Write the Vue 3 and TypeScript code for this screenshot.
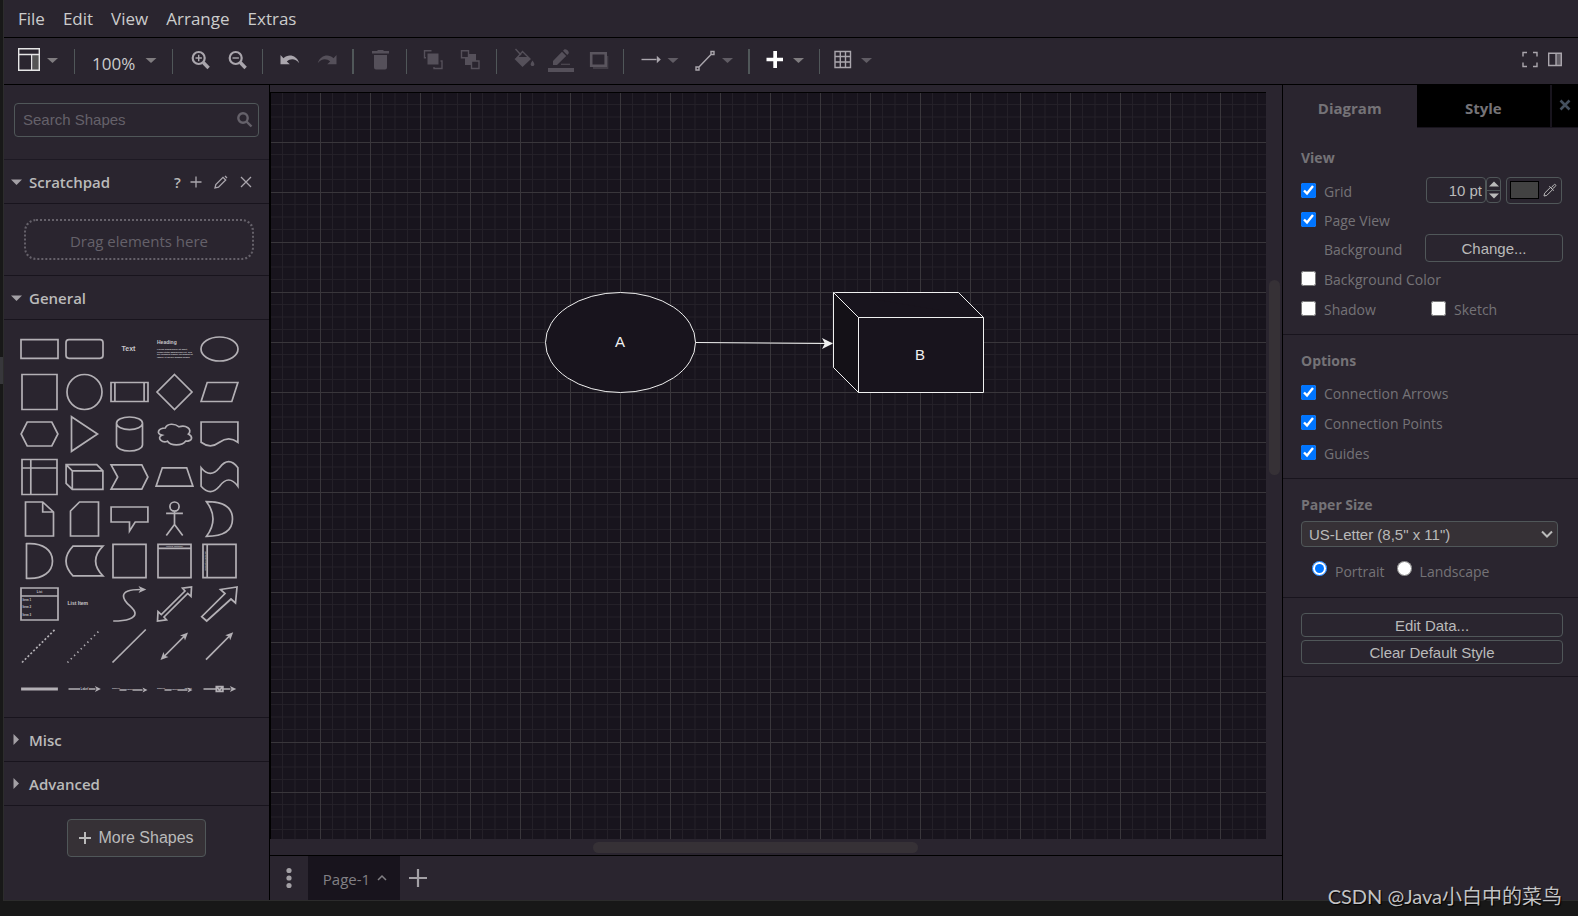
<script setup lang="ts">
import { ref } from 'vue'

interface ShapeText {
  t: string
  x: number
  y: number
  size: number
  middle?: boolean
  vertical?: boolean
}

interface Shape {
  name: string
  d?: string
  solid?: string
  dash?: string
  texts?: ShapeText[]
}

interface Tool {
  name: string
  x?: number
  w?: number
  sep?: 'thin' | 'thick'
  dim?: boolean
}

const menus: string[] = ['File', 'Edit', 'View', 'Arrange', 'Extras']

const tools: Tool[] = [
  { name: 'Zoom In', x: 173, w: 46 },
  { name: 'Zoom Out', x: 219, w: 43 },
  { name: 's1', sep: 'thin' },
  { name: 'Undo', x: 263, w: 46 },
  { name: 'Redo', x: 309, w: 43, dim: true },
  { name: 's2', sep: 'thick' },
  { name: 'Delete', x: 354, w: 52, dim: true },
  { name: 's3', sep: 'thin' },
  { name: 'To Front', x: 407, w: 45, dim: true },
  { name: 'To Back', x: 452, w: 44, dim: true },
  { name: 's4', sep: 'thin' },
  { name: 'Fill Color', x: 497, w: 45, dim: true },
  { name: 'Line Color', x: 542, w: 40, dim: true },
  { name: 'Shadow', x: 582, w: 41, dim: true },
  { name: 's5', sep: 'thin' },
  { name: 'Connection', x: 624, w: 60 },
  { name: 'Waypoints', x: 684, w: 64 },
  { name: 's6', sep: 'thick' },
  { name: 'Insert', x: 750, w: 69 },
  { name: 's7', sep: 'thin' },
  { name: 'Table', x: 820, w: 60 },
]

const shapes: Shape[] = [
  { name: 'Rectangle', d: 'M-18.5-9.3h37v18.6h-37z' },
  { name: 'Rounded Rectangle', d: 'M-15.5-9.3h31a3 3 0 0 1 3 3v12.6a3 3 0 0 1-3 3h-31a3 3 0 0 1-3-3v-12.6a3 3 0 0 1 3-3z' },
  { name: 'Text', texts: [{ t: 'Text', x: -1, y: 2, size: 7, middle: true }] },
  {
    name: 'Textbox',
    texts: [
      { t: 'Heading', x: -17.5, y: -5.5, size: 5 },
      { t: 'Lorem ipsum dolor sit amet,', x: -17.5, y: 1, size: 2.3 },
      { t: 'consectetur adipisicing elit, sed', x: -17.5, y: 3.6, size: 2.3 },
      { t: 'do eiusmod tempor incididunt ut', x: -17.5, y: 6.3, size: 2.3 },
      { t: 'labore et dolore magna aliqua.', x: -17.5, y: 9.1, size: 2.3 },
    ],
  },
  { name: 'Ellipse', d: 'M-18.5 0a18.5 12 0 1 1 37 0a18.5 12 0 1 1-37 0z' },
  { name: 'Square', d: 'M-17.5-17.5h35v35h-35z' },
  { name: 'Circle', d: 'M-17.5 0a17.5 17.5 0 1 1 35 0a17.5 17.5 0 1 1-35 0z' },
  { name: 'Process', d: 'M-18.5-9.5h37v19h-37zM-14.6-9.5v19M14.6-9.5v19' },
  { name: 'Diamond', d: 'M0-17.5L17.5 0L0 17.5L-17.5 0z' },
  { name: 'Parallelogram', d: 'M-12.3-9.5H18.4L12.3 9.5H-18.4z' },
  { name: 'Hexagon', d: 'M-12.3-12H12.3L18.4 0L12.3 12H-12.3L-18.4 0z' },
  { name: 'Triangle', d: 'M-13-17.3L13 0L-13 17.3z' },
  { name: 'Cylinder', d: 'M-13-10.7a13 6.3 0 0 1 26 0V10.7a13 6.3 0 0 1-26 0zM-13-10.7a13 6.3 0 0 0 26 0' },
  { name: 'Cloud', d: 'M-9.2-6C-16.6-6-18.5 0-12.6 1.2C-18.5 3.8-11.8 9.6-7 7.2C-3.7 12 7.4 12 11.1 7.2C18.5 7.2 18.5 2.4 13.9 0C18.5-4.8 11.1-9.6 4.6-7.2C0-10.8-7.4-10.8-9.2-6z' },
  { name: 'Document', d: 'M-18.4-12H18.4V8.3Q9.2 1.3 0 8.3Q-9.2 15.3-18.4 8.3z' },
  { name: 'Internal Storage', d: 'M-17.5-17.5h35v35h-35zM-8.7-17.5v35M-17.5-9h35' },
  { name: 'Cube', d: 'M-18.4-12.3H12.3L18.4-6.2V12.3H-12.2L-18.4 6.3zM-18.4-12.3L-12.2-6.2V12.3M-12.2-6.2H18.4' },
  { name: 'Step', d: 'M-18.4-12.2H12.3L18.4 0L12.3 12.2H-18.4L-11.8 0z' },
  { name: 'Trapezoid', d: 'M-12.2-9.2H12.2L18.4 9.2H-18.4z' },
  { name: 'Tape', d: 'M-18.4-9.3Q-9.2 1.9 0-9.3Q9.2-21.3 18.4-9.3V9.3Q9.2-3.3 0 9.3Q-9.2 20-18.4 9.3z' },
  { name: 'Note', d: 'M-14-17H3.2L14-7V17H-14zM3.2-17V-7H14' },
  { name: 'Card', d: 'M-5-17H14V17H-14V-8z' },
  { name: 'Callout', d: 'M-18.4-12H18.4V3H5.7L0 12V3H-18.4z' },
  { name: 'Actor', d: 'M-4.6-12.4a4.6 4.6 0 1 1 9.2 0a4.6 4.6 0 1 1-9.2 0zM0-7.8V5.5M-8.4-5.6H8.4M0 5.5L-8.2 16.5M0 5.5L8.2 16.5' },
  { name: 'Or', d: 'M-13-17.3Q13-17.3 13 0Q13 17.3-13 17.3Q0 0-13-17.3z' },
  { name: 'And', d: 'M-13-17.3C4-18.5 13-10.5 13 0C13 10.5 4 18.5-13 17.3z' },
  { name: 'Data Storage', d: 'M-11.5-14.8H18.4Q3.8 0 18.4 14.8H-11.5Q-25.5 0-11.5-14.8z' },
  { name: 'Container', d: 'M-16.5-16.6h33v33.2h-33z' },
  { name: 'Vertical Container', d: 'M-16.5-16.6h33v33.2h-33zM-16.5-12.7h33', texts: [{ t: 'Vertical Container', x: 0, y: -13.8, size: 2, middle: true }] },
  { name: 'Horizontal Container', d: 'M-16.5-16.6h33v33.2h-33zM-12.3-16.6v33.2', texts: [{ t: 'Horizontal Container', x: 0, y: -13.6, size: 2, middle: true, vertical: true }] },
  {
    name: 'List',
    d: 'M-18.5-16h37v32h-37zM-18.5-8h37',
    texts: [
      { t: 'List', x: 0, y: -11, size: 3, middle: true },
      { t: 'Item 1', x: -17, y: -3, size: 3 },
      { t: 'Item 2', x: -17, y: 4, size: 3 },
      { t: 'Item 3', x: -17, y: 11.5, size: 3 },
    ],
  },
  { name: 'List Item', texts: [{ t: 'List Item', x: -17, y: 1, size: 5 }] },
  { name: 'Curve', d: 'M-16.3 17C-2 17 5.5 14 5.5 9.5C5.5 3-6 0-6-8C-6-13 3-14.5 11-14.5', solid: 'M16.8-14.4L9-18l2 3.5l-2 3.5z' },
  { name: 'Bidirectional Arrow', d: 'M17-17L16.5-7.7L13.2-10.7L-10.5 13L-8 15.8L-17 17L-16.5 7.7L-13.2 10.7L10.5-13L8-15.8z' },
  { name: 'Arrow', d: 'M17.5-17L1-14.5L5.5-10.5L-17.8 12.7L-12.8 17L11.5-5L16-1z' },
  { name: 'Dashed Line', d: 'M-17.5 16.5L15.5-16.5', dash: '2 2' },
  { name: 'Dotted Line', d: 'M-17 16.5L14.5-15', dash: '1.3 3.4' },
  { name: 'Line', d: 'M-17 16.5L16.3-16.5' },
  { name: 'Bidirectional Connector', d: 'M-10 10L10-10', solid: 'M13.5-13.5L10.5-5.5L9.3-9.3L5.5-10.5zM-14 14L-6 11L-9.8 9.8L-11 6z' },
  { name: 'Directional Connector', d: 'M-13.5 13.7L10-10', solid: 'M13.7-13.7L10.7-5.7L9.5-9.5L5.7-10.7z' },
  { name: 'Link', solid: 'M-18.4-1.4h36.8v2.8h-36.8z' },
  { name: 'Connector with Label', d: 'M-16 0H-4.5M4.5 0H11', solid: 'M16.4 0L10.4-3l1.6 3l-1.6 3z', texts: [{ t: 'Label', x: 0, y: 1, size: 3, middle: true }] },
  {
    name: 'Connector with 2 Labels',
    d: 'M-10 1H-3M3 1H13',
    solid: 'M18 1L13-1.5l1.2 2.5l-1.2 2.5z',
    texts: [
      { t: 'Source', x: -17.5, y: 0, size: 2.4 },
      { t: 'Label', x: 0, y: 1.4, size: 2.4, middle: true },
    ],
  },
  {
    name: 'Connector with 3 Labels',
    d: 'M-10 1H-3M3 1H13',
    solid: 'M18 1L13-1.5l1.2 2.5l-1.2 2.5z',
    texts: [
      { t: 'Source', x: -17.5, y: 0, size: 2.4 },
      { t: 'Label', x: 0, y: 1.4, size: 2.4, middle: true },
      { t: 'Target', x: 10, y: 0, size: 2.4 },
    ],
  },
  { name: 'Connector with Symbol', d: 'M-16 0H-3.2M3.4 0H11M-3.2-2.3h6.6v4.6h-6.6zM-3.2-2L.1 1L3.4-2', solid: 'M16.8 0L10.4-3l1.6 3l-1.6 3z' },
]

const grid = ref(true)
const pageView = ref(true)
const backgroundColor = ref(false)
const shadow = ref(false)
const sketch = ref(false)
const arrows = ref(true)
const points = ref(true)
const guides = ref(true)
const gridSize = ref('10 pt')
const paper = ref('letter')
const orientation = ref('portrait')
const search = ref('')
</script>

<template>
  <div class="app">
    <div class="editor">
      <nav class="menubar" aria-label="Main menu">
        <button v-for="m in menus" :key="m" type="button">{{ m }}</button>
      </nav>

      <div class="toolbar" role="toolbar" aria-label="Tools">
        <button type="button" aria-label="View">
          <svg width="62" height="28" viewBox="12 48 62 28">
            <path class="solid dark" d="M33 56h6v15h-6z" />
            <path class="line bright" d="M18.7 49.7h20.6v21.6H18.7zM18.7 55.5h20.6M31.7 55.5v16" />
            <path class="solid caret" d="M47 59h11l-5.500 5z" />
          </svg>
        </button>
        <span class="sep"></span>
        <button type="button" class="zoom">
          <span>100%</span>
          <svg width="12" height="28" viewBox="145 48 12 28"><path class="solid caret" d="M145.500 59h11l-5.500 5z" /></svg>
        </button>
        <span class="sep"></span>
        <template v-for="t in tools" :key="t.name">
          <span v-if="t.sep" class="sep" :class="t.sep"></span>
          <button v-else type="button" :class="{ dim: t.dim }" :aria-label="t.name">
            <svg :width="t.w" height="28" :viewBox="`${t.x} 48 ${t.w} 28`">
              <g v-if="t.name === 'Zoom In'">
                <circle class="line thick" cx="198.700" cy="59" r="6" />
                <path class="line" d="M195.500 59h6.400M198.700 55.800v6.400" />
                <path class="line heavy" d="M203.300 63.500l5.300 5.500" />
              </g>
              <g v-else-if="t.name === 'Zoom Out'">
                <circle class="line thick" cx="235.700" cy="59" r="6" />
                <path class="line" d="M232.500 59h6.400" />
                <path class="line heavy" d="M240.300 63.500l5.300 5.500" />
              </g>
              <path v-else-if="t.name === 'Undo'" class="solid" d="M280.500 56v9.200h9.300l-3-2.800c4-3.400 9-2.600 12.500 1.800c-2.600-8.200-11-9.800-15.800-5z" />
              <path v-else-if="t.name === 'Redo'" class="solid" d="M336.500 56v9.200h-9.300l3-2.800c-4-3.400-9-2.600-12.500 1.800c2.600-8.200 11-9.800 15.800-5z" />
              <path v-else-if="t.name === 'Delete'" class="solid" d="M372 52h5l1-1h5l1 1h5v2.500h-17zM374 56h13v12.500a2 2 0 0 1-2 2h-9a2 2 0 0 1-2-2z" />
              <g v-else-if="t.name === 'To Front'">
                <path class="solid" d="M427.500 54.500h11v11h-11z" />
                <path class="line" d="M431.500 51.700h-7v7h1.500M434 68v1.500h8v-7.500h-1.500" />
              </g>
              <g v-else-if="t.name === 'To Back'">
                <path class="solid" d="M465 55h11v11h-11z" />
                <path class="line cover" d="M461.500 51.700h7v7h-7zM471.500 62h7.500v7.500h-7.500z" />
              </g>
              <g v-else-if="t.name === 'Fill Color'">
                <path class="line" d="M515.500 50l5.500 6M516 60l6.500-7.500l7.500 7.500" />
                <path class="solid" d="M514.500 60l3-2h10.500l3 2l-8.500 8z" />
                <path class="solid" d="M532.500 61.500c2.500 3.200 2.500 5.500 0 5.500s-2.500-2.300 0-5.500z" />
              </g>
              <g v-else-if="t.name === 'Line Color'">
                <path class="solid" d="M553 66v-4l9-9.200l4.200 4.200l-9.200 9zM563 51.800l1.200-1.200c1.800-1.800 6 2.400 4.200 4.200l-1.200 1.200z" />
                <path class="solid" d="M561 64.800h9v1h-9zM548 69h26v4h-26z" />
              </g>
              <g v-else-if="t.name === 'Shadow'">
                <path class="solid faint" d="M593 57h15.300v13H593z" />
                <path class="backed" d="M591.200 54.200h14.500v12.500h-14.500z" />
              </g>
              <g v-else-if="t.name === 'Connection'">
                <path class="line" d="M641.500 60.500h15" />
                <path class="solid" d="M660.800 60.500l-4-3.800v7.600z" />
                <path class="solid caret soft" d="M667.500 59h11l-5.500 5z" />
              </g>
              <g v-else-if="t.name === 'Waypoints'">
                <path class="line" d="M698.500 68.500l13-13.500M696 68h3v3h-3zM711 52.500h3v3h-3z" />
                <path class="solid caret soft" d="M722 59h11l-5.500 5z" />
              </g>
              <g v-else-if="t.name === 'Insert'">
                <path class="solid white" d="M773.300 52h3.700v6.700h6v3.600h-6v6.700h-3.700v-6.700H766.500v-3.600h6.800z" />
                <path class="solid caret" d="M793 59h11l-5.500 5z" />
              </g>
              <g v-else-if="t.name === 'Table'">
                <path class="line" d="M835 52.500h15.500v16H835zM835 57.500h15.500M835 63h15.500M840.300 52.500v16M845.500 52.500v16" />
                <path class="solid caret soft" d="M861 59h11l-5.500 5z" />
              </g>
            </svg>
          </button>
        </template>
        <span class="spacer"></span>
        <button type="button" aria-label="Fullscreen">
          <svg width="31" height="28" viewBox="1512 48 31 28">
            <path class="line" d="M1523 57.500v-4h4M1533 53.500h4v4M1537 63.500v4h-4M1527 67.500h-4v-4" />
          </svg>
        </button>
        <button type="button" aria-label="Format panel">
          <svg width="25" height="28" viewBox="1543 48 25 28">
            <path class="solid soft" d="M1556 54.500h5v12h-5z" />
            <path class="line" d="M1548.700 54.200h12.600v12.300h-12.600zM1556 54.500v12" />
          </svg>
        </button>
      </div>

      <div class="body">
        <aside class="sidebar">
          <div class="search">
            <div class="searchbox">
              <input v-model="search" type="text" placeholder="Search Shapes" aria-label="Search Shapes" />
              <svg width="16" height="16" viewBox="0 0 16 16">
                <circle cx="6" cy="6" r="4.700" class="glass" />
                <path class="glass" d="M9.500 9.500L14.500 14.500" />
              </svg>
            </div>
          </div>

          <header class="head">
            <svg class="mark" width="12" height="12" viewBox="0 0 12 12"><path d="M0 3.500h11L5.500 9z" /></svg>
            <h2>Scratchpad</h2>
            <div class="acts">
              <button type="button" class="help" aria-label="Help">?</button>
              <button type="button" aria-label="Add"><svg width="14" height="14" viewBox="0 0 14 14"><path d="M7 1.500v11M1.500 7h11" /></svg></button>
              <button type="button" aria-label="Edit"><svg width="14" height="14" viewBox="0 0 14 14"><path d="M1 13l.8-3.500L9 2.300l2.700 2.700L4.500 12.200zM11 1l2 2" /></svg></button>
              <button type="button" aria-label="Close"><svg width="14" height="14" viewBox="0 0 14 14"><path d="M2 2l10 10M12 2L2 12" /></svg></button>
            </div>
          </header>
          <div class="scratch"><div class="drop">Drag elements here</div></div>

          <header class="head">
            <svg class="mark" width="12" height="12" viewBox="0 0 12 12"><path d="M0 3.500h11L5.500 9z" /></svg>
            <h2>General</h2>
          </header>
          <div class="palette">
            <button v-for="s in shapes" :key="s.name" type="button" :aria-label="s.name">
              <svg width="45" height="42" viewBox="-22.5 -21 45 42">
                <path v-if="s.d" class="outline" :d="s.d" :stroke-dasharray="s.dash" />
                <path v-if="s.solid" class="filled" :d="s.solid" />
                <text
                  v-for="x in s.texts"
                  :key="x.t"
                  :x="x.x"
                  :y="x.y"
                  :font-size="x.size"
                  :text-anchor="x.middle ? 'middle' : 'start'"
                  :transform="x.vertical ? 'rotate(-90)' : undefined"
                >{{ x.t }}</text>
              </svg>
            </button>
          </div>

          <header class="head">
            <svg class="mark" width="12" height="12" viewBox="0 0 12 12"><path d="M2.500 0L8 5.500L2.500 11z" /></svg>
            <h2>Misc</h2>
          </header>
          <header class="head">
            <svg class="mark" width="12" height="12" viewBox="0 0 12 12"><path d="M2.500 0L8 5.500L2.500 11z" /></svg>
            <h2>Advanced</h2>
          </header>
          <button type="button" class="more">
            <svg width="12" height="12" viewBox="0 0 12 12"><path d="M6 0v12M0 6h12" /></svg>
            More Shapes
          </button>
        </aside>

        <main class="stage">
          <div class="view">
            <svg class="canvas" role="img" aria-label="Diagram">
              <defs>
                <pattern id="grid" x="-1" y="-1" width="50" height="50" patternUnits="userSpaceOnUse">
                  <path class="minor" d="M0 12.500H50M0 25H50M0 37.500H50M12.500 0V50M25 0V50M37.500 0V50" />
                  <path class="major" d="M0 .5H50M.5 0V50" />
                </pattern>
              </defs>
              <rect width="100%" height="100%" fill="url(#grid)" />
              <g class="node">
                <ellipse cx="349.500" cy="249.500" rx="75" ry="50" />
                <path d="M562.500 199.500h125l25 25v75h-125l-25-25z" />
                <path class="side" d="M562.500 199.500l25 25v75l-25-25z" />
                <path d="M562.500 199.500l25 25h125M587.500 224.500v75" />
                <path d="M424.500 249.500L554 250.500" />
              </g>
              <path class="tip" d="M562 250.500L551 245l2.800 5.500l-2.800 5.500z" />
              <text x="349" y="254">A</text>
              <text x="649" y="267">B</text>
            </svg>
            <div class="vscroll"><div class="vthumb"></div></div>
          </div>
          <div class="hscroll"><div class="hthumb"></div></div>
          <footer class="tabs">
            <button type="button" class="pages" aria-label="Pages">
              <svg width="6" height="22" viewBox="0 0 6 22"><circle cx="3" cy="3.500" r="2.600" /><circle cx="3" cy="11" r="2.600" /><circle cx="3" cy="18.500" r="2.600" /></svg>
            </button>
            <button type="button" class="page">
              <span>Page-1</span>
              <svg width="10" height="10" viewBox="0 0 10 10"><path d="M1 7L5 3L9 7" /></svg>
            </button>
            <button type="button" class="add" aria-label="Insert Page">
              <svg width="18" height="18" viewBox="0 0 18 18"><path d="M9 0v18M0 9h18" /></svg>
            </button>
          </footer>
        </main>

        <aside class="format">
          <div class="ftabs">
            <button type="button" class="on">Diagram</button>
            <button type="button">Style</button>
            <button type="button" class="shut" aria-label="Close">
              <svg width="12" height="12" viewBox="0 0 12 12"><path d="M1.500 1.500l9 9M10.500 1.500l-9 9" /></svg>
            </button>
          </div>

          <section class="first">
            <h3>View</h3>
            <div class="row">
              <label><input v-model="grid" type="checkbox" /><span>Grid</span></label>
              <div class="size">
                <input v-model="gridSize" type="text" aria-label="Grid size" />
                <div class="spin">
                  <button type="button" aria-label="Increase"><svg width="10" height="6" viewBox="0 0 10 6"><path d="M0 5.500h10L5 .5z" /></svg></button>
                  <button type="button" aria-label="Decrease"><svg width="10" height="6" viewBox="0 0 10 6"><path d="M0 .5h10L5 5.500z" /></svg></button>
                </div>
                <button type="button" class="color" aria-label="Grid color">
                  <span class="swatch"></span>
                  <svg width="14" height="14" viewBox="0 0 14 14"><path d="M1 13l.6-2.800L7.500 4.300l2.200 2.200L3.800 12.400zM6.300 3.300l4.400 4.400M8.500 4.500l2.300-2.700c1.200-1.200 2.800.4 1.600 1.600L9.700 5.700" /></svg>
                </button>
              </div>
            </div>
            <div class="row short"><label><input v-model="pageView" type="checkbox" /><span>Page View</span></label></div>
            <div class="row">
              <span class="plain">Background</span>
              <button type="button" class="btn change">Change...</button>
            </div>
            <div class="row"><label><input v-model="backgroundColor" type="checkbox" /><span>Background Color</span></label></div>
            <div class="row pair">
              <label><input v-model="shadow" type="checkbox" /><span>Shadow</span></label>
              <label><input v-model="sketch" type="checkbox" /><span>Sketch</span></label>
            </div>
          </section>

          <section class="options">
            <h3>Options</h3>
            <div class="row"><label><input v-model="arrows" type="checkbox" /><span>Connection Arrows</span></label></div>
            <div class="row"><label><input v-model="points" type="checkbox" /><span>Connection Points</span></label></div>
            <div class="row"><label><input v-model="guides" type="checkbox" /><span>Guides</span></label></div>
          </section>

          <section class="paper">
            <h3>Paper Size</h3>
            <div class="pick">
              <select v-model="paper" aria-label="Paper Size">
                <option value="letter">US-Letter (8,5" x 11")</option>
                <option value="a4">A4 (210 mm x 297 mm)</option>
              </select>
              <svg width="12" height="8" viewBox="0 0 12 8"><path d="M1 1.500l5 5l5-5" /></svg>
            </div>
            <div class="radios">
              <label><input v-model="orientation" type="radio" value="portrait" /><span>Portrait</span></label>
              <label><input v-model="orientation" type="radio" value="landscape" /><span>Landscape</span></label>
            </div>
          </section>

          <section class="stack">
            <button type="button" class="btn">Edit Data...</button>
            <button type="button" class="btn">Clear Default Style</button>
          </section>
        </aside>
      </div>
    </div>
    <div class="handle"></div>
    <div class="watermark">CSDN @Java小白中的菜鸟</div>
  </div>
</template>

<style>
html,
body {
  margin: 0;
  background: #181818;
}
</style>

<style scoped>
.app {
  position: relative;
  box-sizing: border-box;
  min-height: 100vh;
  padding: 0 0 15px 3px;
  display: flex;
  background: #181818;
  font-family: 'Open Sans', 'Noto Sans', sans-serif;
  font-size: 14px;
  color: #bababa;
}
.app * {
  box-sizing: border-box;
}
.editor {
  flex: 1;
  min-width: 0;
  display: flex;
  flex-direction: column;
  background: #2a252f;
  border-left: 1px solid #2c2c2c;
  border-bottom: 1px solid #2c2c2c;
}
.handle {
  position: absolute;
  left: 0;
  top: 357px;
  width: 3px;
  height: 27px;
  background: #37373b;
}
button {
  margin: 0;
  padding: 0;
  border: 0;
  background: none;
  font: inherit;
  color: inherit;
}
svg {
  display: block;
  flex: none;
}
h2,
h3 {
  margin: 0;
}

.menubar {
  display: flex;
  align-items: center;
  gap: 18px;
  height: 38px;
  padding-left: 14px;
  border-bottom: 1px solid #000;
  font-size: 17px;
  color: #ccc;
}

.toolbar {
  display: flex;
  align-items: center;
  height: 47px;
  padding: 0 10px 0 8px;
  border-bottom: 1px solid #000;
}
.spacer {
  flex: 1;
}
.sep {
  width: 1px;
  height: 25px;
  background: #505759;
}
.sep.thick {
  width: 2px;
}
.zoom {
  width: 97px;
  display: flex;
  align-items: center;
  justify-content: space-between;
  padding: 0 15px 0 17px;
  font-size: 17px;
  color: #ccc;
}
.zoom span {
  padding-top: 4px;
}
.toolbar .solid {
  fill: #aaa6ad;
}
.toolbar .line {
  fill: none;
  stroke: #aaa6ad;
  stroke-width: 1.4;
}
.toolbar .line.thick {
  stroke-width: 2.2;
}
.toolbar .line.heavy {
  stroke-width: 3.4;
}
.toolbar .line.bright {
  stroke: #e6e6e6;
}
.toolbar .solid.dark {
  fill: #555;
}
.toolbar .solid.caret {
  fill: #7f7c7f;
}
.toolbar .solid.soft {
  fill: #605c64;
}
.toolbar .solid.white {
  fill: #fff;
}
.toolbar .dim .solid {
  fill: #55505a;
}
.toolbar .dim .solid.faint {
  fill: #423d46;
}
.toolbar .dim .line {
  stroke: #55505a;
}
.toolbar .line.cover {
  fill: #2a252f;
}
.backed {
  fill: #2a252f;
  stroke: #5a555e;
  stroke-width: 2.6;
}

.body {
  flex: 1;
  display: flex;
  min-height: 0;
}

.sidebar {
  flex: none;
  width: 266px;
  border-right: 1px solid #000;
}
.search {
  height: 75px;
  padding: 18px 10px 0;
  border-bottom: 1px solid #1d1923;
}
.searchbox {
  display: flex;
  align-items: center;
  height: 34px;
  padding: 0 5px 0 8px;
  border: 1px solid #505759;
  border-radius: 4px;
}
.searchbox input {
  flex: 1;
  min-width: 0;
  padding: 0 0 2px;
  border: 0;
  outline: 0;
  background: none;
  font: 15px 'Liberation Sans', sans-serif;
  color: #bababa;
}
.searchbox input::placeholder {
  color: #65616a;
  opacity: 1;
}
.glass {
  fill: none;
  stroke: #65616a;
  stroke-width: 2.4;
}
.head {
  display: flex;
  align-items: center;
  height: 44px;
  padding: 0 16px 0 7px;
  border-bottom: 1px solid #18141d;
}
.mark {
  margin-right: 6px;
  fill: #a3a0a5;
}
.head h2 {
  flex: 1;
  font-size: 15px;
  font-weight: 600;
  line-height: 20px;
}
.acts {
  display: flex;
  align-items: center;
  gap: 11px;
}
.acts path {
  fill: none;
  stroke: #aaa6ad;
  stroke-width: 1.300;
}
.help {
  width: 7px;
  margin-right: -3px;
  font-size: 15px;
  font-weight: 600;
}
.scratch {
  height: 72px;
  padding: 15px 15px 0 20px;
  border-bottom: 1px solid #18141d;
}
.drop {
  height: 41px;
  border: 2px dotted #65616a;
  border-radius: 12px;
  text-align: center;
  font-size: 15px;
  line-height: 41px;
  color: #65616a;
}
.palette {
  display: grid;
  grid-template-columns: repeat(5, 45px);
  grid-template-rows: repeat(9, 1fr);
  height: 398px;
  padding: 8px 0 7px 13px;
  border-bottom: 1px solid #18141d;
}
.palette .outline {
  fill: none;
  stroke: #b3b0b5;
  stroke-width: 1.700;
}
.palette .filled {
  fill: #b3b0b5;
}
.palette text {
  font-family: 'Liberation Sans', sans-serif;
  font-weight: 700;
  fill: #c8c5ca;
}
.more {
  display: flex;
  align-items: center;
  justify-content: center;
  gap: 7px;
  width: 139px;
  height: 38px;
  margin: 13px 0 30px 63px;
  border: 1px solid #505759;
  border-radius: 4px;
  background: #363136;
  font: 16px 'Liberation Sans', sans-serif;
  color: #bababa;
}
.more path {
  stroke: #bababa;
  stroke-width: 2;
}

.stage {
  flex: 1;
  min-width: 0;
  display: flex;
  flex-direction: column;
}
.view {
  flex: 1;
  display: flex;
  min-height: 0;
  padding-top: 7px;
}
.canvas {
  flex: 1;
  min-width: 0;
  height: 100%;
  border-top: 1px solid #000;
  border-left: 1px solid #000;
  background: #18141d;
}
.minor {
  fill: none;
  stroke: #242028;
}
.major {
  fill: none;
  stroke: #39363b;
}
.node {
  fill: #18141d;
  stroke: #f0f0f0;
}
.node .side {
  fill: #141117;
}
.tip {
  fill: #f0f0f0;
}
.canvas text {
  font: 15px 'Liberation Sans', sans-serif;
  text-anchor: middle;
  fill: #f0f0f0;
}
.vscroll {
  flex: none;
  width: 16px;
  padding: 188px 2px 0 3px;
}
.vthumb {
  height: 195px;
  border-radius: 6px;
  background: #363136;
}
.hscroll {
  height: 16px;
  padding: 3px 0 0 323px;
}
.hthumb {
  width: 325px;
  height: 11px;
  border-radius: 6px;
  background: #363136;
}
.tabs {
  display: flex;
  height: 45px;
  border-top: 1px solid #000;
}
.tabs button {
  display: flex;
  align-items: center;
  justify-content: center;
}
.pages {
  width: 38px;
  fill: #a3a0a5;
}
.tabs .page {
  width: 92px;
  padding-left: 2px;
  gap: 7px;
  background: #18141d;
  font-size: 15px;
  color: #828085;
}
.page span {
  padding-top: 2px;
}
.page path {
  fill: none;
  stroke: #828085;
  stroke-width: 1.500;
}
.add {
  width: 36px;
}
.add path {
  stroke: #a3a0a5;
  stroke-width: 2.200;
}

.format {
  flex: none;
  width: 296px;
  border-left: 1px solid #000;
  color: #757377;
}
.ftabs {
  display: flex;
  height: 43px;
}
.ftabs button {
  flex: 1;
  padding-top: 3px;
  border-bottom: 1px solid #18141d;
  background: #000;
  font-size: 15px;
  font-weight: 700;
  color: #757377;
}
.ftabs .on {
  border-bottom: 0;
  background: none;
}
.ftabs .shut {
  flex: none;
  display: flex;
  align-items: flex-start;
  justify-content: center;
  width: 28px;
  padding-top: 14px;
  border-left: 2px solid #18141d;
}
.shut path {
  stroke: #44505f;
  stroke-width: 2.600;
}
section {
  padding: 14px 15px 9px 18px;
  border-bottom: 1px solid #18141d;
}
section.first {
  padding-top: 18px;
  padding-bottom: 11px;
}
section.options {
  padding-bottom: 11px;
}
h3 {
  margin-bottom: 4px;
  font-size: 14px;
  font-weight: 700;
  line-height: 24px;
}
.first h3 {
  margin-bottom: 5px;
}
.row {
  display: flex;
  align-items: center;
  justify-content: space-between;
  height: 30px;
}
.row.short {
  height: 28px;
}
.row.pair {
  justify-content: flex-start;
}
.pair label {
  width: 130px;
}
label {
  display: flex;
  align-items: center;
  gap: 8px;
}
label span,
.plain {
  padding-top: 2px;
}
label input {
  width: 15px;
  height: 15px;
  margin: 0;
  accent-color: #0075ff;
}
.plain {
  padding-left: 23px;
}
.size {
  display: flex;
  align-items: center;
  margin-right: 1px;
}
.size input {
  width: 60px;
  height: 26px;
  padding: 0 3px;
  border: 1px solid #505759;
  border-radius: 4px;
  outline: 0;
  background: none;
  text-align: right;
  font: 15px 'Liberation Sans', sans-serif;
  color: #bababa;
}
.spin {
  display: flex;
  flex-direction: column;
  width: 15px;
  height: 26px;
  border: 1px solid #505759;
  border-radius: 4px;
}
.spin button {
  flex: 1;
  display: flex;
  align-items: center;
  justify-content: center;
  fill: #bababa;
}
.spin button + button {
  border-top: 1px solid #505759;
}
.color {
  display: flex;
  align-items: center;
  gap: 4px;
  width: 56px;
  height: 27px;
  margin-left: 5px;
  padding-left: 3px;
  border: 1px solid #505759;
  border-radius: 4px;
}
.swatch {
  width: 29px;
  height: 18px;
  border: 1px solid #000;
  background: #424242;
}
.color path {
  fill: none;
  stroke: #bababa;
}
.btn {
  height: 24px;
  border: 1px solid #505759;
  border-radius: 4px;
  font: 15px 'Liberation Sans', sans-serif;
  color: #bababa;
}
.btn.change {
  width: 138px;
  height: 28px;
}
.pick {
  display: grid;
  align-items: center;
  margin-right: 5px;
}
.pick > * {
  grid-area: 1 / 1;
}
.pick select {
  height: 26px;
  padding: 0 7px;
  appearance: none;
  border: 1px solid #505759;
  border-radius: 4px;
  background: #363136;
  font: 15px 'Liberation Sans', sans-serif;
  color: #bababa;
}
.pick svg {
  justify-self: end;
  margin-right: 5px;
  pointer-events: none;
}
.pick path {
  fill: none;
  stroke: #bababa;
  stroke-width: 2;
}
.radios {
  display: flex;
  gap: 12px;
  height: 41px;
  padding: 6px 0 0 11px;
}
.radios label {
  height: 30px;
}
.radios span {
  padding-top: 6px;
}
.stack {
  display: flex;
  flex-direction: column;
  gap: 3px;
  padding: 15px 15px 12px 18px;
}

.watermark {
  position: absolute;
  right: 16px;
  bottom: 8px;
  font: 20px/24px Lato, 'Noto Sans CJK SC', sans-serif;
  color: #c3c3c5;
  text-shadow: 1px 1px 1px #000;
}
</style>
